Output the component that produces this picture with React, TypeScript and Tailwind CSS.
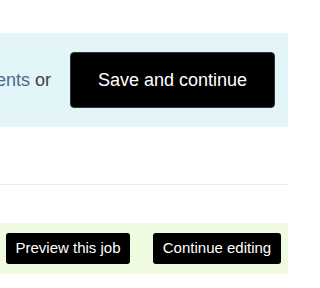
import React from "react";

export default function App() {
  return (
    <div className="w-[288px] h-[288px] overflow-hidden bg-white font-['Liberation_Sans',Arial,sans-serif]">
      <div className="h-[33px]" />

      {/* Save bar */}
      <div className="h-[94px] bg-[#e2f5f8] flex items-center justify-end pr-[13px] overflow-hidden">
        <div className="flex items-center gap-[19px] shrink-0">
          <span className="whitespace-nowrap text-[18px] text-[#404040] shrink-0">
            or add <a className="text-[#4b6a8c]">attachments</a> or
          </span>
          <button className="shrink-0 w-[205px] h-[56px] rounded-[4px] bg-black text-white text-[18px] border border-[#333]">
            Save and continue
          </button>
        </div>
      </div>

      <div className="h-[57px]" />
      <div className="h-px bg-[#ececec]" />
      <div className="h-[38px]" />

      {/* Preview bar */}
      <div className="h-[51px] bg-[#eefbe0] flex items-center pl-[6px] gap-[23px]">
        <button className="w-[124px] h-[31px] rounded-[3px] bg-black text-white text-[15px]">
          Preview this job
        </button>
        <button className="w-[128px] h-[31px] rounded-[3px] bg-black text-white text-[15px]">
          Continue editing
        </button>
      </div>
    </div>
  );
}
